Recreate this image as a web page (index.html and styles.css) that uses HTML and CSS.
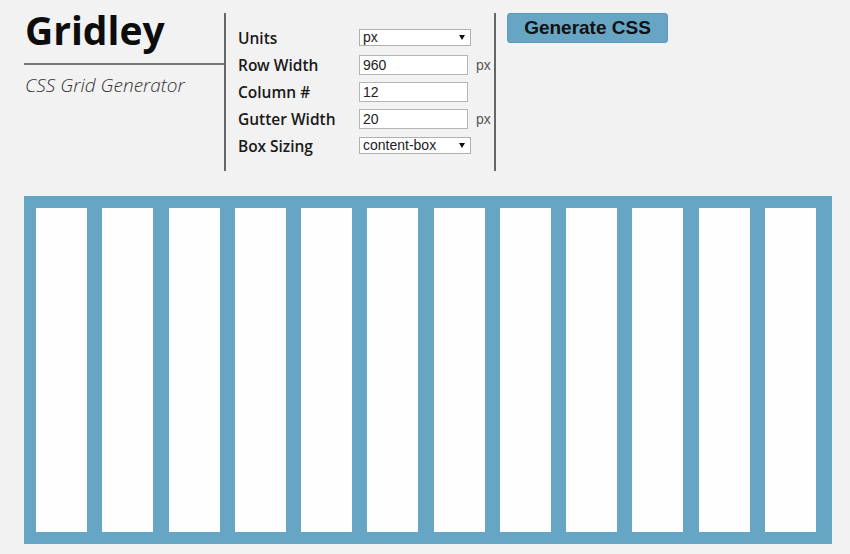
FILE: index.html
```html
<!DOCTYPE html>
<html>
<head>
<meta charset="utf-8">
<title>Gridley</title>
<link rel="stylesheet" href="styles.css">
</head>
<body>
<header class="header">
  <div class="brand">
    <h1 class="title">Gridley</h1>
    <p class="subtitle">CSS Grid Generator</p>
  </div>
  <form class="settings">
    <label class="label">Units</label>
    <div class="select-wrap"><select class="select"><option>px</option></select><span class="arrow"></span></div>
    <span class="unit"></span>

    <label class="label">Row Width</label>
    <input class="field" type="text" value="960">
    <span class="unit">px</span>

    <label class="label">Column #</label>
    <input class="field" type="text" value="12">
    <span class="unit"></span>

    <label class="label">Gutter Width</label>
    <input class="field" type="text" value="20">
    <span class="unit">px</span>

    <label class="label">Box Sizing</label>
    <div class="select-wrap"><select class="select"><option>content-box</option></select><span class="arrow"></span></div>
    <span class="unit"></span>
  </form>
  <button class="generate" type="button">Generate CSS</button>
</header>
<main class="grid">
  <div class="col"></div><div class="col"></div><div class="col"></div><div class="col"></div>
  <div class="col"></div><div class="col"></div><div class="col"></div><div class="col"></div>
  <div class="col"></div><div class="col"></div><div class="col"></div><div class="col"></div>
</main>
</body>
</html>
```

FILE: styles.css
```css
html, body {
  margin: 0;
  padding: 0;
  background: #f2f2f2;
}
body {
  width: 850px;
  height: 554px;
  overflow: hidden;
  font-family: "Open Sans", "Liberation Sans", sans-serif;
  color: #111;
}
.header {
  display: flex;
  align-items: flex-start;
}
.brand {
  margin-left: 24px;
  width: 200px;
  padding-top: 8px;
}
.title {
  margin: 0;
  font-size: 39px;
  line-height: 44px;
  font-weight: 700;
  color: #0d0d0d;
  padding-left: 1px;
  padding-bottom: 11px;
  border-bottom: 2px solid #7a7a7a;
}
.subtitle {
  margin: 8px 0 0 1px;
  font-size: 19px;
  line-height: 24px;
  font-style: italic;
  font-weight: 300;
  color: #333;
}
.settings {
  box-sizing: border-box;
  margin: 13px 0 0 0;
  width: 272px;
  height: 158px;
  border-left: 2px solid #666;
  border-right: 2px solid #666;
  padding: 11px 0 0 12px;
  display: grid;
  grid-template-columns: 121px 112px auto;
  grid-auto-rows: 27px;
  align-items: center;
}
.label {
  font-family: "Open Sans SemiBold", "Open Sans", "Liberation Sans", sans-serif;
  font-size: 15.5px;
  font-weight: 600;
  color: #1a1a1a;
  line-height: 20px;
}
.field {
  box-sizing: border-box;
  width: 109px;
  height: 20px;
  margin: 0;
  padding: 0 3px;
  border: 1px solid #b5b5b5;
  background: #fff;
  font-family: "Liberation Sans", Arial, sans-serif;
  font-size: 14px;
  color: #222;
}
.select-wrap {
  position: relative;
  width: 112px;
  height: 17px;
}
.select {
  display: block;
  box-sizing: border-box;
  appearance: none;
  -webkit-appearance: none;
  width: 112px;
  height: 17px;
  margin: 0;
  padding: 0 3px;
  border: 1px solid #b0b0b0;
  border-radius: 0;
  background: #fff;
  font-family: "Liberation Sans", Arial, sans-serif;
  font-size: 14px;
  line-height: 15px;
  color: #222;
}
.arrow {
  position: absolute;
  right: 6px;
  top: 6px;
  width: 0;
  height: 0;
  border-left: 3px solid transparent;
  border-right: 3px solid transparent;
  border-top: 5px solid #111;
}
.unit {
  padding-left: 5px;
  font-family: "Liberation Sans", Arial, sans-serif;
  font-size: 14px;
  color: #555;
}
.generate {
  box-sizing: border-box;
  margin: 13px 0 0 11px;
  width: 161px;
  height: 30px;
  padding: 0;
  border: 1px solid #5d9aba;
  border-radius: 3px;
  background: #67a5c4;
  font-family: "Liberation Sans", Arial, sans-serif;
  font-size: 19px;
  font-weight: 700;
  color: #111;
}
.grid {
  box-sizing: border-box;
  margin: 25px 0 0 24px;
  width: 808px;
  height: 348px;
  padding: 12px 16px 12px 12px;
  background: #67a5c4;
  display: flex;
  justify-content: space-between;
}
.col {
  width: 51px;
  background: #fefefe;
}
```
